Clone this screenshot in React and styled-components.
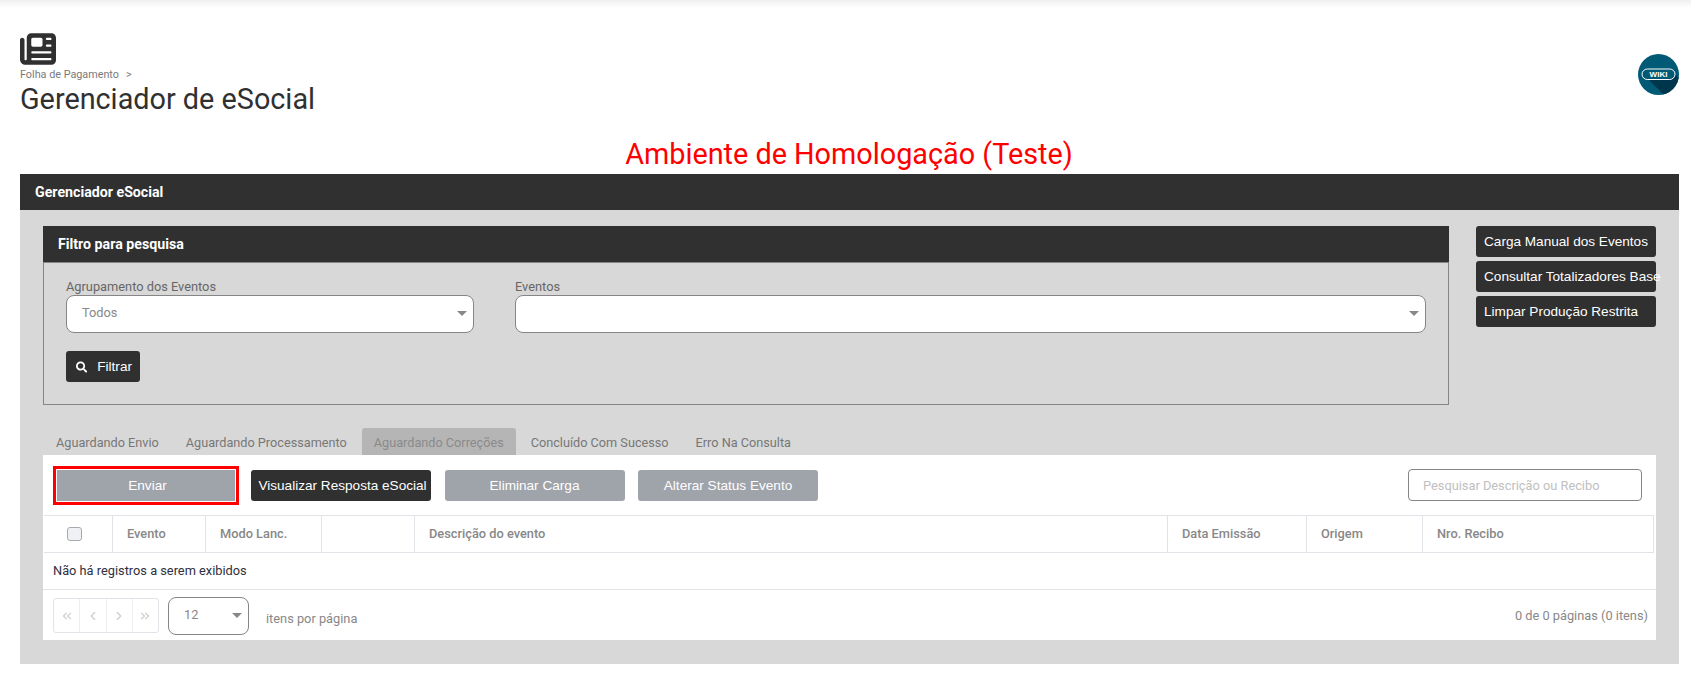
import React from "react";
import styled, { createGlobalStyle } from "styled-components";
import { FaSearch } from "react-icons/fa";
import { FaNewspaper } from "react-icons/fa6";
import { ChevronLeft, ChevronRight, ChevronsLeft, ChevronsRight } from "lucide-react";

const GlobalStyle = createGlobalStyle`
  html, body {
    margin: 0;
    padding: 0;
    background: #fff;
    font-family: "Roboto", "Liberation Sans", sans-serif;
  }
`;

const TopShade = styled.div`
  height: 8px;
  background: linear-gradient(#f0f0f0, #fff);
`;

const Header = styled.header`
  display: flex;
  justify-content: space-between;
  padding: 23px 12px 0 20px;
  height: 105px;
`;

const TitleBlock = styled.div`
  display: flex;
  flex-direction: column;
  svg {
    display: block;
    color: #303030;
  }
`;

const Breadcrumb = styled.div`
  font-size: 10.8px;
  line-height: 13px;
  margin-top: 1px;
  color: #7a7a7a;
  span {
    margin-left: 7px;
  }
`;

const PageTitle = styled.h1`
  margin: 0;
  font-size: 28.8px;
  line-height: 36px;
  font-weight: 400;
  color: #303030;
`;

const WikiBadge = styled.svg`
  margin-top: 23px;
  display: block;
`;

const Environment = styled.div`
  text-align: center;
  font-size: 28.8px;
  line-height: 36px;
  color: #f00;
  height: 38px;
  padding-left: 7px;
`;

const Panel = styled.section`
  margin: 0 12px 0 20px;
  background: #d8d8d8;
`;

const BarTitle = styled.div`
  height: 36px;
  line-height: 36px;
  padding-left: 15px;
  background: #303030;
  color: #fff;
  font-size: 14.2px;
  font-weight: 700;
`;

const PanelBody = styled.div`
  padding: 16px 23px 24px;
`;

const FilterRow = styled.div`
  display: flex;
  gap: 27px;
  align-items: flex-start;
`;

const FilterBox = styled.div`
  width: 1406px;
`;

const FilterBody = styled.div`
  height: 143px;
  box-sizing: border-box;
  border: 1px solid #858585;
  padding: 16px 22px 0;
`;

const Fields = styled.div`
  display: flex;
  gap: 41px;
`;

const Field = styled.label`
  display: block;
  width: ${(p) => p.$width}px;
  font-size: 12.8px;
  line-height: 16px;
  color: #666;
`;

const SelectBox = styled.div`
  position: relative;
  box-sizing: border-box;
  width: ${(p) => p.$width || "100%"};
  height: 38px;
  padding-left: 15px;
  line-height: 34px;
  background: #fff;
  border: 1px solid #858585;
  border-radius: 8px;
  font-size: 12.8px;
  color: #888;
  &::after {
    content: "";
    position: absolute;
    right: 6px;
    top: 50%;
    margin-top: -3px;
    border-left: 5px solid transparent;
    border-right: 5px solid transparent;
    border-top: 5px solid #888;
  }
`;

const DarkButton = styled.button`
  display: ${(p) => (p.$block ? "block" : "inline-flex")};
  align-items: center;
  box-sizing: border-box;
  height: 31px;
  padding: 0 8px;
  border: 0;
  border-radius: 3px;
  background: #303030;
  color: #fff;
  font-family: "Liberation Sans", Arial, sans-serif;
  font-size: 13.6px;
  text-align: left;
  white-space: nowrap;
  overflow: visible;
`;

const FilterButton = styled(DarkButton)`
  width: 74px;
  margin-top: 18px;
  padding-left: 10px;
  gap: 10px;
  svg {
    font-size: 12px;
  }
`;

const SideButtons = styled.div`
  display: flex;
  flex-direction: column;
  gap: 4px;
  width: 180px;
  ${DarkButton} {
    width: 180px;
  }
`;

const Tabs = styled.nav`
  display: flex;
  margin-top: 23px;
  height: 27px;
`;

const Tab = styled.div`
  padding: 0 12px 0 ${(p) => (p.$first ? 13 : 12)}px;
  margin-right: 3px;
  height: 27px;
  line-height: 29px;
  font-size: 12.7px;
  color: ${(p) => (p.$active ? "#8a8a8a" : "#777")};
  background: ${(p) => (p.$active ? "#b5b5b5" : "transparent")};
  border-radius: 3px 3px 0 0;
`;

const Card = styled.div`
  background: #fff;
  width: 1613px;
  height: 185px;
`;

const Toolbar = styled.div`
  display: flex;
  align-items: center;
  height: 60px;
  padding: 0 14px;
  gap: 13.5px;
`;

const ActionButton = styled.button`
  box-sizing: border-box;
  width: ${(p) => p.$width || 180}px;
  height: 31px;
  padding: 0 0 0 ${(p) => (p.$indent ? 3 : 0)}px;
  border: 0;
  border-radius: 3px;
  background: ${(p) => (p.$dark ? "#303030" : "#9fa3aa")};
  color: #fff;
  font-family: "Liberation Sans", Arial, sans-serif;
  font-size: 13.6px;
  white-space: nowrap;
  ${(p) =>
    p.$highlight &&
    `
    border-radius: 0;
    outline: 3px solid #f00;
    outline-offset: 1px;
    margin-right: 2.5px;
  `}
`;

const SearchInput = styled.input`
  box-sizing: border-box;
  width: 234px;
  height: 32px;
  margin-left: auto;
  padding: 0 14px;
  border: 1px solid #858585;
  border-radius: 4px;
  font-family: "Roboto", sans-serif;
  font-size: 12.8px;
  outline: none;
  &::placeholder {
    color: #c0c0c0;
  }
`;

const HeadRow = styled.div`
  display: grid;
  grid-template-columns: 69px 93px 116px 93px 753px 139px 116px 231px;
  margin-left: 1px;
  width: 1610px;
  height: 38px;
  box-sizing: border-box;
  border-top: 1px solid #e1e3e9;
  border-bottom: 1px solid #e1e3e9;
`;

const HeadCell = styled.div`
  box-sizing: border-box;
  display: flex;
  align-items: center;
  justify-content: ${(p) => (p.$center ? "center" : "flex-start")};
  padding: ${(p) => (p.$center ? "0 7px 0 0" : "0 0 2px 14px")};
  font-size: 12.8px;
  font-weight: 500;
  color: #888;
  border-right: 1px solid #e1e3e9;
`;

const CheckMark = styled.span`
  display: block;
  width: 13px;
  height: 12px;
  border: 1px solid #a6a9b2;
  border-radius: 3px;
  background: #f0f1f4;
`;

const EmptyRow = styled.div`
  height: 37px;
  box-sizing: border-box;
  padding-left: 10px;
  line-height: 36px;
  font-size: 12.8px;
  color: #303040;
  border-bottom: 1px solid #e1e3e9;
`;

const Pager = styled.div`
  display: flex;
  align-items: center;
  box-sizing: border-box;
  height: 50px;
  padding: 1px 8px 0 10px;
  font-size: 12.8px;
  color: #888;
`;

const PagerButtons = styled.div`
  display: flex;
  box-sizing: border-box;
  width: 106px;
  height: 35px;
  border: 1px solid #e1e3e9;
  border-radius: 3px;
  margin-right: 9px;
`;

const PagerButton = styled.span`
  flex: 1;
  display: flex;
  align-items: center;
  justify-content: center;
  color: #ccc;
  border-right: 1px solid #eee;
  &:last-child {
    border-right: 0;
  }
`;

const PerPageLabel = styled.span`
  margin-left: 17px;
  padding-top: 5px;
`;

const PageCount = styled.span`
  margin-left: auto;
`;

const columns = ["Evento", "Modo Lanc.", "", "Descrição do evento", "Data Emissão", "Origem", "Nro. Recibo"];

const tabs = ["Aguardando Envio", "Aguardando Processamento", "Aguardando Correções", "Concluído Com Sucesso", "Erro Na Consulta"];

const App = () => {
  return (
    <>
      <GlobalStyle />
      <TopShade />
      <Header>
        <TitleBlock>
          <FaNewspaper size={36} />
          <Breadcrumb>
            Folha de Pagamento<span>&gt;</span>
          </Breadcrumb>
          <PageTitle>Gerenciador de eSocial</PageTitle>
        </TitleBlock>
        <WikiBadge width="41" height="41" viewBox="0 0 41 41">
          <defs>
            <clipPath id="wiki-clip">
              <circle cx="20.5" cy="20.5" r="20.5" />
            </clipPath>
          </defs>
          <circle cx="20.5" cy="20.5" r="20.5" fill="#005a75" />
          <polygon points="10,25 35,25 37,20 60,43 28,43" fill="#00364b" clipPath="url(#wiki-clip)" />
          <rect x="4" y="15" width="33" height="10.5" rx="5.25" fill="#005a75" stroke="#fff" strokeWidth="1" />
          <text x="20.5" y="23.2" textAnchor="middle" fontSize="8" fontWeight="700" fontFamily="Liberation Sans" fill="#fff">
            WIKI
          </text>
        </WikiBadge>
      </Header>
      <Environment>Ambiente de Homologação (Teste)</Environment>
      <Panel>
        <BarTitle>Gerenciador eSocial</BarTitle>
        <PanelBody>
          <FilterRow>
            <FilterBox>
              <BarTitle>Filtro para pesquisa</BarTitle>
              <FilterBody>
                <Fields>
                  <Field $width={408}>
                    Agrupamento dos Eventos
                    <SelectBox>Todos</SelectBox>
                  </Field>
                  <Field $width={911}>
                    Eventos
                    <SelectBox />
                  </Field>
                </Fields>
                <FilterButton>
                  <FaSearch />
                  Filtrar
                </FilterButton>
              </FilterBody>
            </FilterBox>
            <SideButtons>
              <DarkButton $block>Carga Manual dos Eventos</DarkButton>
              <DarkButton $block>Consultar Totalizadores Base</DarkButton>
              <DarkButton $block>Limpar Produção Restrita</DarkButton>
            </SideButtons>
          </FilterRow>
          <Tabs>
            {tabs.map((t, i) => (
              <Tab key={t} $first={i === 0} $active={i === 2}>
                {t}
              </Tab>
            ))}
          </Tabs>
          <Card>
            <Toolbar>
              <ActionButton $width={178} $highlight $indent>
                Enviar
              </ActionButton>
              <ActionButton $dark $indent>
                Visualizar Resposta eSocial
              </ActionButton>
              <ActionButton>Eliminar Carga</ActionButton>
              <ActionButton>Alterar Status Evento</ActionButton>
              <SearchInput placeholder="Pesquisar Descrição ou Recibo" />
            </Toolbar>
            <HeadRow>
              <HeadCell $center>
                <CheckMark />
              </HeadCell>
              {columns.map((c) => (
                <HeadCell key={c}>{c}</HeadCell>
              ))}
            </HeadRow>
            <EmptyRow>Não há registros a serem exibidos</EmptyRow>
            <Pager>
              <PagerButtons>
                <PagerButton>
                  <ChevronsLeft size={14} />
                </PagerButton>
                <PagerButton>
                  <ChevronLeft size={14} />
                </PagerButton>
                <PagerButton>
                  <ChevronRight size={14} />
                </PagerButton>
                <PagerButton>
                  <ChevronsRight size={14} />
                </PagerButton>
              </PagerButtons>
              <SelectBox $width="81px">12</SelectBox>
              <PerPageLabel>itens por página</PerPageLabel>
              <PageCount>0 de 0 páginas (0 itens)</PageCount>
            </Pager>
          </Card>
        </PanelBody>
      </Panel>
    </>
  );
};

export default App;
